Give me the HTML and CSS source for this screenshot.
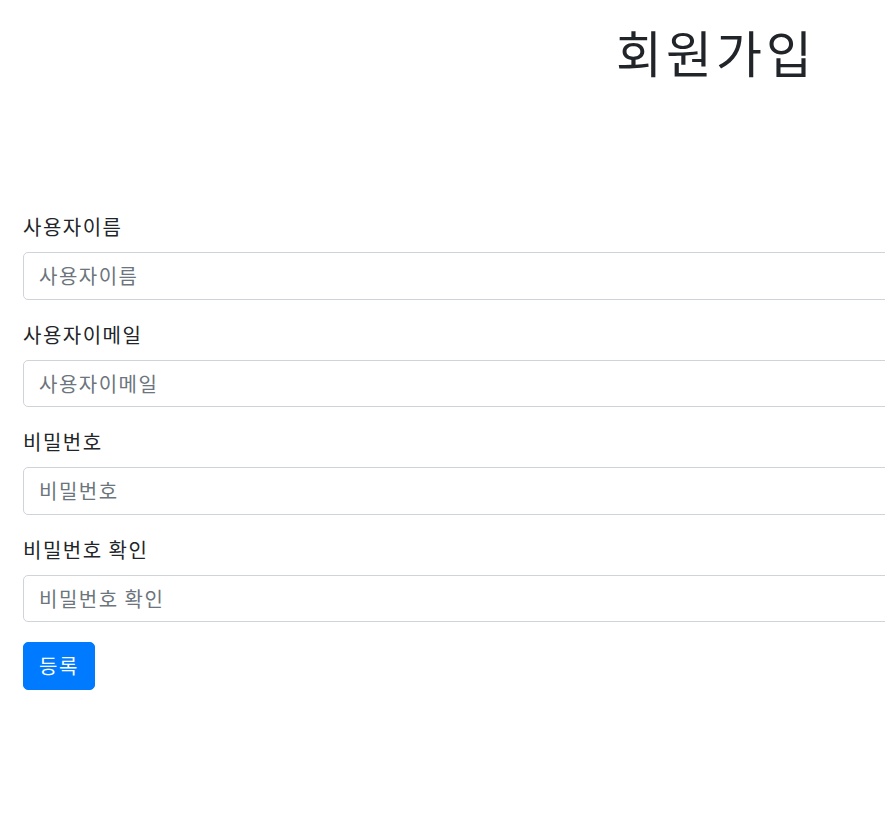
FILE: index.html
```html
<!DOCTYPE html>
<html>
<head>
    <meta charset="utf-8">
    <title>회원가입</title>
    <link rel="stylesheet" href="styles.css">
</head>
<body>
    <div class="viewport">
        <div class="page">
            <h1 class="title">회원가입</h1>

            <form class="signup-form" id="signupForm">
                <div class="form-group">
                    <label for="username">사용자이름</label>
                    <input type="text" id="username" class="form-control" placeholder="사용자이름">
                </div>
                <div class="form-group">
                    <label for="email">사용자이메일</label>
                    <input type="email" id="email" class="form-control" placeholder="사용자이메일">
                </div>
                <div class="form-group">
                    <label for="password">비밀번호</label>
                    <input type="password" id="password" class="form-control" placeholder="비밀번호">
                </div>
                <div class="form-group">
                    <label for="password2">비밀번호 확인</label>
                    <input type="password" id="password2" class="form-control" placeholder="비밀번호 확인">
                </div>
                <button type="submit" class="btn-submit">등록</button>
            </form>
        </div>
    </div>
</body>
</html>
```

FILE: styles.css
```css
/* Styles for sign up page */

body {
    font-family: "Noto Sans CJK KR", "Noto Sans", sans-serif;
    font-size: 20px;
    line-height: 1.5;
    color: #212529;
    background-color: #fff;
    margin: 0;
    padding: 0;
}

.viewport {
    width: 100%;
    overflow: hidden;
}

.page {
    width: 1432px;
}

.title {
    font-size: 50px;
    font-weight: 400;
    line-height: 60px;
    letter-spacing: 4px;
    text-align: center;
    margin: 0;
    padding-top: 21px;
    height: 191px;
}

.signup-form {
    padding: 0 23px;
}

.form-group {
    margin-bottom: 20px;
}

label {
    display: block;
    line-height: 30px;
    margin-bottom: 10px;
    letter-spacing: 1.5px;
}

.form-control {
    display: block;
    box-sizing: border-box;
    width: 100%;
    height: 47.5px;
    padding: 0 15px;
    font-family: inherit;
    font-size: 20px;
    color: #495057;
    border: 1.25px solid #ced4da;
    border-radius: 5px;
    background-color: #fff;
    letter-spacing: 1.5px;
}

.form-control::placeholder {
    color: #6c757d;
}

.btn-submit {
    box-sizing: border-box;
    height: 47.5px;
    padding: 0 15px;
    font-family: inherit;
    font-size: 20px;
    color: #fff;
    background-color: #007bff;
    border: 1.25px solid #007bff;
    border-radius: 5px;
    letter-spacing: 1.5px;
    cursor: pointer;
}

.btn-submit:hover {
    background-color: #0069d9;
}
```
